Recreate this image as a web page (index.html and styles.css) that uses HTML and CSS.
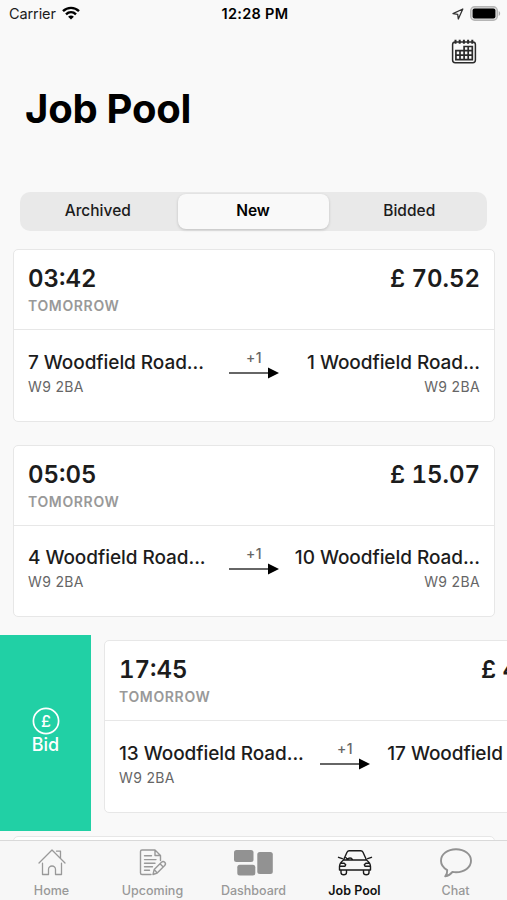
FILE: index.html
```html
<!DOCTYPE html>
<html lang="en">
<head>
<meta charset="utf-8">
<title>Job Pool</title>
<link rel="stylesheet" href="styles.css">
</head>
<body>
<div class="screen">
  <header class="status">
    <div class="status-left"><span class="carrier">Carrier</span>
      <svg class="wifi" viewBox="0 0 18 14" width="18" height="14"><g fill="none" stroke="#000" stroke-width="2.4"><path d="M1 5.2C5.5.8 12.500.8 17 5.200"/><path d="M4 8.300c2.900-2.800 7.100-2.800 10 0"/></g><path d="M9 13.600 6.100 10.700c1.700-1.500 4.100-1.500 5.800 0z"/></svg>
    </div>
    <span class="clock">12:28 PM</span>
    <div class="status-right">
      <svg viewBox="0 0 12 12" width="12" height="12"><path d="M1 5.700 10.800 1 6.300 11 5.700 6.300z" fill="none" stroke="#333" stroke-width="1.300" stroke-linejoin="round"/></svg>
      <svg viewBox="0 0 31 15" width="31" height="15"><rect x=".7" y=".7" width="26.600" height="13.600" rx="4" fill="#ddd" stroke="#b5b5b5" stroke-width="1.400"/><rect x="2.600" y="2.600" width="22.800" height="9.800" rx="2"/><path d="M28.700 5v5c1.900-.7 1.900-4.300 0-5" fill="#aaa"/></svg>
    </div>
  </header>
  <div class="toolbar">
    <svg viewBox="0 0 26 26" width="26" height="26" fill="none" stroke="#2b2b2b"><rect x="1.600" y="2.900" width="22.800" height="20.800" rx="2.600" stroke-width="1.500"/><path d="M4.500 .8v4M8.700 .8v4M12.900 .8v4M17.100 .8v4M21.300 .8v4" stroke-width="2"/><path d="M4.900 11.700h8.200V7.500h8.200v13.200H4.900zM4.900 16.200h16.400M13.100 11.700h8.200M9 11.700v9M13.100 11.700v9M17.200 7.500v13.200" stroke-width="1.700"/></svg>
  </div>
  <h1 class="title">Job Pool</h1>
  <nav class="segments">
    <span class="segment">Archived</span>
    <span class="segment active">New</span>
    <span class="segment">Bidded</span>
  </nav>
  <main class="jobs">
    <div class="row">
      <article class="card">
        <div class="card-head">
          <div class="line"><span class="time">03:42</span><span class="price">£ 70.52</span></div>
          <div class="day">TOMORROW</div>
        </div>
        <div class="route">
          <div class="stop"><div class="street">7 Woodfield Road...</div><div class="code">W9 2BA</div></div>
          <div class="via"><span>+1</span><svg viewBox="0 0 50 12" width="50" height="12"><path d="M0 6h41" stroke="#333" stroke-width="1.500"/><path d="M39 .5 50 6l-11 5.500z"/></svg></div>
          <div class="stop end"><div class="street">1 Woodfield Road...</div><div class="code">W9 2BA</div></div>
        </div>
      </article>
    </div>
    <div class="row">
      <article class="card">
        <div class="card-head">
          <div class="line"><span class="time">05:05</span><span class="price">£ 15.07</span></div>
          <div class="day">TOMORROW</div>
        </div>
        <div class="route">
          <div class="stop"><div class="street">4 Woodfield Road...</div><div class="code">W9 2BA</div></div>
          <div class="via"><span>+1</span><svg viewBox="0 0 50 12" width="50" height="12"><path d="M0 6h41" stroke="#333" stroke-width="1.500"/><path d="M39 .5 50 6l-11 5.500z"/></svg></div>
          <div class="stop end"><div class="street">10 Woodfield Road...</div><div class="code">W9 2BA</div></div>
        </div>
      </article>
    </div>
    <div class="row swiped">
      <div class="bid">
        <svg viewBox="0 0 28 28" width="28" height="28"><circle cx="14" cy="14" r="12.600" fill="none" stroke="#fff" stroke-width="1.700"/><text class="pound" x="14" y="19.800" text-anchor="middle">£</text></svg>
        <span>Bid</span>
      </div>
      <article class="card">
        <div class="card-head">
          <div class="line"><span class="time">17:45</span><span class="price">£ 45.07</span></div>
          <div class="day">TOMORROW</div>
        </div>
        <div class="route">
          <div class="stop"><div class="street">13 Woodfield Road...</div><div class="code">W9 2BA</div></div>
          <div class="via"><span>+1</span><svg viewBox="0 0 50 12" width="50" height="12"><path d="M0 6h41" stroke="#333" stroke-width="1.500"/><path d="M39 .5 50 6l-11 5.500z"/></svg></div>
          <div class="stop end"><div class="street">17 Woodfield Road...</div></div>
        </div>
      </article>
    </div>
    <div class="row"><article class="card"></article></div>
  </main>
  <footer class="tabs">
    <div class="tab">
      <svg viewBox="0 0 32 32" width="32" height="32" fill="none" stroke="#999" stroke-width="1.300" stroke-linejoin="round" stroke-linecap="round"><path d="M3 16 16 3l13 13M6.500 16.200v11.300h6V22.500a3.500 3.500 0 0 1 7 0v5h6V16.200M20.500 4.200h4v6.500"/></svg>
      <span>Home</span>
    </div>
    <div class="tab">
      <svg viewBox="0 0 32 32" width="32" height="32" fill="none" stroke="#999" stroke-width="1.400" stroke-linejoin="round" stroke-linecap="round"><path d="M14 27.500H5a1.500 1.500 0 0 1-1.500-1.500V4.500A1.500 1.500 0 0 1 5 3h13l5.500 5.500v5M18 3v5.500h5.500M7.500 8.700h7M7.500 12.600h11.500M7.500 16.200h10.500M7.500 19.700h8M7.500 23.300h5M16 27.500l1.200-5L24.500 15.200a2 2 0 0 1 3.200 3.200L20.200 26zM17.200 22.500l3 3.400M23 16.800l3 3"/></svg>
      <span>Upcoming</span>
    </div>
    <div class="tab">
      <svg viewBox="0 0 40 32" width="40" height="32" fill="#929292"><rect x="0" y="3" width="19.500" height="12" rx="2.500"/><rect x="3.300" y="17.800" width="18" height="10.700" rx="2.500"/><rect x="23.300" y="5" width="15.500" height="22" rx="2.500"/></svg>
      <span>Dashboard</span>
    </div>
    <div class="tab current">
      <svg viewBox="0 0 36 32" width="36" height="32" fill="none" stroke="#1b1b1b" stroke-width="1.400" stroke-linejoin="round" stroke-linecap="round"><path d="M6.500 13 10 5.200C10.600 4 11 3.700 12.200 3.700h11.600c1.200 0 1.600.3 2.200 1.500L29.500 13M6.500 13h23c2 1.500 4 4 4 6.500V23h-31v-3.500c0-2.500 2-5 4-6.500zM1.500 10.300 5.300 11.700M34.500 10.300l-3.800 1.400M3 19.200h5l.7-1.500-1.500-1.500H4.200M33 19.200h-5l-.7-1.500 1.500-1.500h3M4 23v2.500c0 3 5.500 3 5.500 0V23M26.500 23v2.500c0 3 5.500 3 5.500 0V23M10.500 12.700a2.700 2.700 0 0 1 5 0M11 12.700l-2-2"/></svg>
      <span>Job Pool</span>
    </div>
    <div class="tab">
      <svg viewBox="0 0 34 32" width="34" height="32" fill="none" stroke="#929292" stroke-width="1.900" stroke-linejoin="round"><path d="M17 2.300c8.500 0 15 5 15 11.500s-6.500 11.400-15 11.400c-1.200 0-2.400-.1-3.500-.3-1.800 2.400-4 3.900-7.300 4.400 1.500-1.600 2.200-3.600 2-6.200C4.500 21 2 17.700 2 13.800 2 7.300 8.500 2.300 17 2.300z"/></svg>
      <span>Chat</span>
    </div>
  </footer>
</div>
</body>
</html>
```
FILE: styles.css
```css
* { box-sizing: border-box; }
body { margin: 0; font-family: Inter, "Liberation Sans", sans-serif; background: #f9f9f9; color: #1c1c1c; }
svg { display: block; flex: none; }
.screen { width: 507px; height: 900px; display: flex; flex-direction: column; overflow: hidden; }
.status { height: 28px; flex: none; display: grid; grid-template-columns: 1fr auto 1fr; align-items: center; padding: 0 6px 1px 9px; }
.status-left, .status-right { display: flex; align-items: center; }
.status-left { gap: 6px; }
.status-right { justify-content: flex-end; gap: 6px; }
.carrier { font-size: 14.500px; letter-spacing: -0.1px; }
.wifi { margin-top: -2px; }
.clock { font-size: 14.500px; font-weight: 600; color: #000; letter-spacing: .3px; }
.toolbar { height: 50px; flex: none; display: flex; justify-content: flex-end; padding: 11px 30px 0 0; }
.title { margin: 0; height: 114px; flex: none; padding: 7px 0 0 25px; font-size: 40px; line-height: 48px; font-weight: 700; letter-spacing: -0.25px; color: #000; }
.segments { height: 39px; flex: none; margin: 0 20px; padding: 2px; display: flex; background: #e9e9e9; border-radius: 10px; }
.segment { flex: 1; display: flex; align-items: center; justify-content: center; padding: 0 4px 2px 0; font-size: 15.500px; font-weight: 500; }
.segment:last-child { padding: 0 0 2px 5px; }
.segment.active { flex: 0 0 151px; padding-right: 0; background: #f9f9f9; border-radius: 8px; box-shadow: 0 1px 3px rgba(0,0,0,.18); font-weight: 600; color: #000; }
.jobs { flex: 1; min-height: 0; overflow: hidden; padding-top: 13px; }
.row { height: 195.500px; display: flex; padding: 5px 12.500px 18px 13px; }
.card { flex: 0 0 482px; border: 1px solid #e7e7e7; border-radius: 5px; background: #fff; display: flex; flex-direction: column; }
.card-head { height: 80px; padding: 13px 14px 0; border-bottom: 1px solid #e7e7e7; }
.line { display: flex; justify-content: space-between; font-size: 24px; font-weight: 600; line-height: 32px; font-variant-numeric: tabular-nums; }
.day { font-size: 14px; line-height: 21px; font-weight: 600; color: #999; letter-spacing: .65px; }
.route { display: flex; justify-content: space-between; padding: 19px 14px 0; }
.stop { width: 187px; white-space: nowrap; }
.end { display: flex; flex-direction: column; align-items: flex-end; }
.street { font-size: 19px; line-height: 26px; font-weight: 500; letter-spacing: -0.06px; padding-top: .6px; }
.code { font-size: 14px; line-height: 22px; color: #666; letter-spacing: .35px; }
.via { width: 50px; display: flex; flex-direction: column; align-items: center; font-size: 14px; line-height: 18px; font-weight: 500; color: #666; letter-spacing: .4px; }
.swiped { padding: 0; gap: 13px; }
.swiped .card { margin: 5px 0 18px; }
.bid { flex: 0 0 91px; background: #21d0a5; color: #fff; display: flex; flex-direction: column; align-items: center; justify-content: center; padding-bottom: 3px; font-size: 18px; line-height: 22px; font-weight: 500; }
.bid span { margin-top: -1px; }
.pound { font-size: 16px; fill: #fff; }
.tabs { height: 60px; flex: none; display: grid; grid-template-columns: repeat(5, 101px); justify-content: center; border-top: 1px solid #d9d9d9; background: #f7f7f7; }
.tab { display: flex; flex-direction: column; align-items: center; padding-top: 6px; font-size: 12.500px; font-weight: 500; line-height: 16px; color: #999; }
.tab span { margin-top: 4px; }
.current { color: #111; font-weight: 600; }
```
